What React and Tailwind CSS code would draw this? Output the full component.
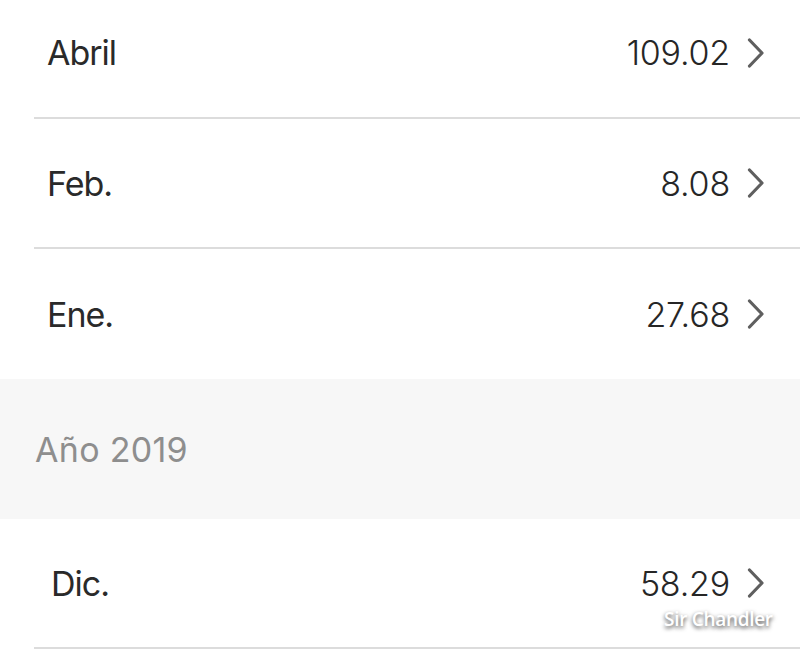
import React from "react";

function Chevron() {
  return (
    <svg width="20" height="30" viewBox="0 0 20 30" className="shrink-0">
      <path d="M3.5 2 L16 15 L3.5 28" fill="none" stroke="#5f5f5f" strokeWidth="3.2" strokeLinecap="round" strokeLinejoin="round" />
    </svg>
  );
}

function Row({ label, value, first, last, labelPad = "pl-[47px]" }) {
  return (
    <div className={`flex flex-col ${first ? "h-[131px]" : "h-[130px]"}`}>
      <div className={`flex-1 flex items-center justify-between ${labelPad} pr-[34px]`}>
        <span className="text-[34px] text-[#2a2a2a] tracking-[-1px]">{label}</span>
        <div className="flex items-center gap-[16px]">
          <span className="text-[34px] font-light text-[#262626] tracking-[-0.2px]">{value}</span>
          <Chevron />
        </div>
      </div>
      {!last && <div className="ml-[34px] h-[2px] bg-[#dcdcdc]" />}
    </div>
  );
}

export default function App() {
  return (
    <div
      className="w-[800px] h-[651px] overflow-hidden bg-white relative"
      style={{ fontFamily: "Inter, 'Noto Sans', sans-serif" }}
    >
      <div className="-mt-[12px] flex flex-col">
        <Row label="Abril" value="109.02" first />
        <Row label="Feb." value="8.08" />
        <Row label="Ene." value="27.68" last />
        <div className="h-[140px] bg-[#f7f7f7] flex items-center pl-[35px]">
          <span className="text-[34px] text-[#8e8e8e] tracking-[0.3px]">Año 2019</span>
        </div>
        <Row label="Dic." value="58.29" labelPad="pl-[51px]" />
      </div>
      <div
        className="absolute left-[664px] top-[605px] text-[19px] font-semibold text-white tracking-[-0.3px]"
        style={{ textShadow: "0 2px 4px rgba(0,0,0,0.75)", fontFamily: "'Open Sans', sans-serif" }}
      >
        Sir Chandler
      </div>
    </div>
  );
}
